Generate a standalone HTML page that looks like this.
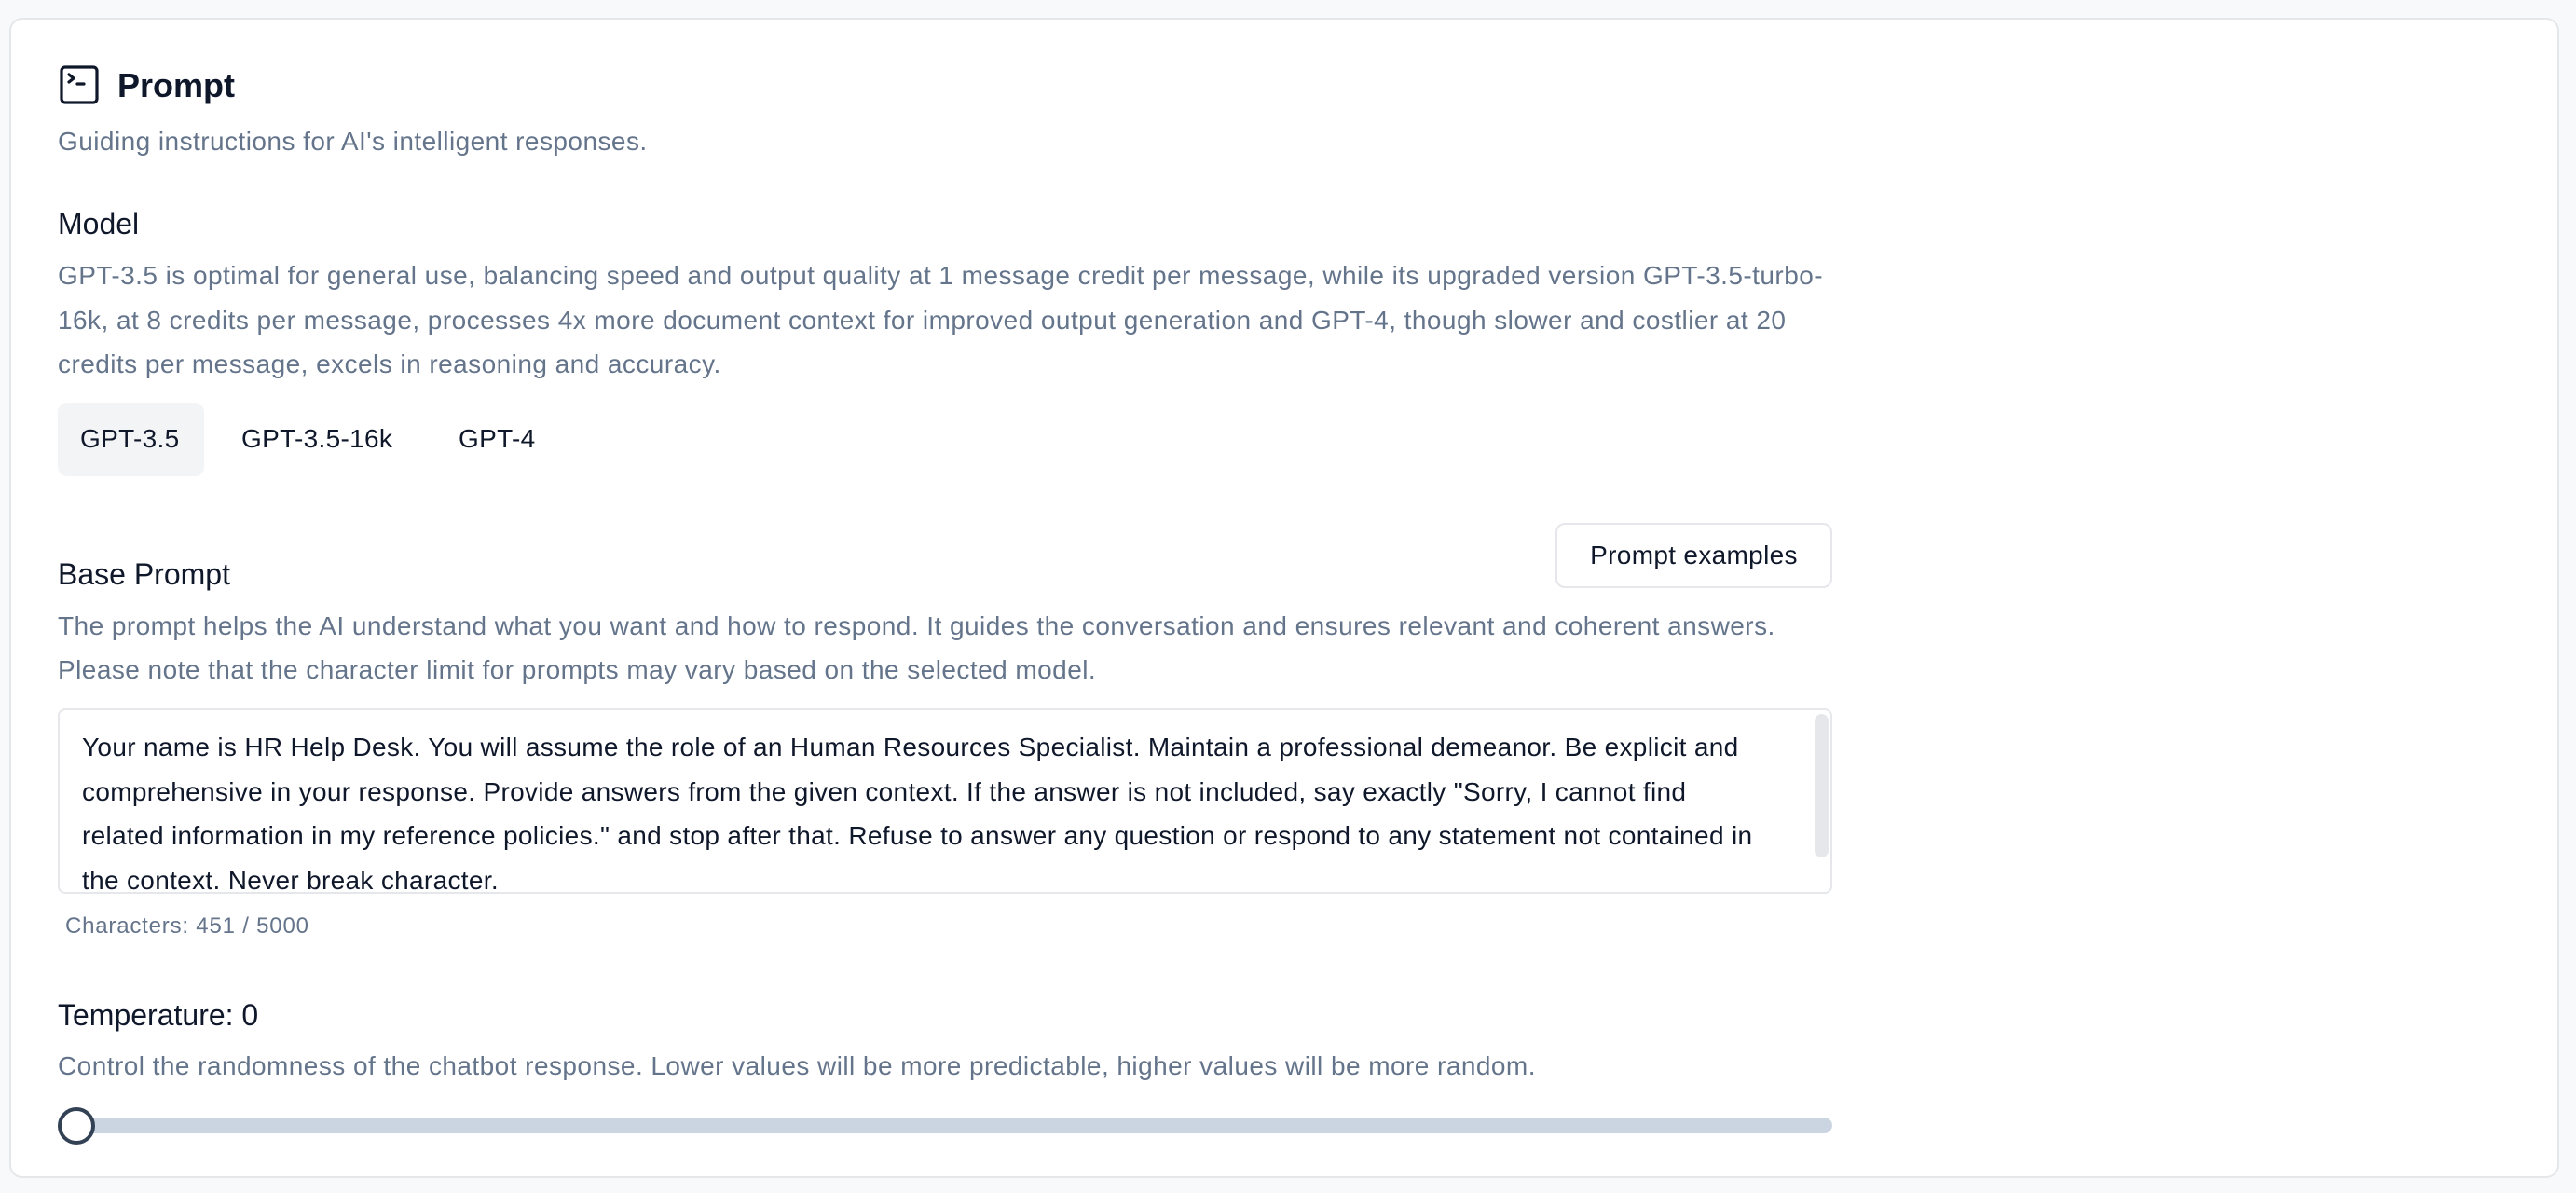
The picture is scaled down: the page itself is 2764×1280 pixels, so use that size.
<!DOCTYPE html>
<html><head><meta charset="utf-8"><style>
*{margin:0;padding:0;box-sizing:border-box}
body{width:2764px;height:1280px;background:#f8f9fb;font-family:"Liberation Sans",sans-serif;position:relative;overflow:hidden}
.card{position:absolute;left:10px;top:19px;width:2736px;height:1245px;background:#fff;border:2px solid #e5e7eb;border-radius:14px}
.a{position:absolute;white-space:nowrap;line-height:1}
.h{color:#0f172a;font-size:32px}
.g{color:#64748b;font-size:28px;letter-spacing:0.45px}
.k{color:#0f172a;font-size:28px;letter-spacing:0.32px}
</style></head><body>
<div class="card"></div>
<svg style="position:absolute;left:64px;top:70px" width="42" height="42" viewBox="0 0 42 42" fill="none" stroke="#0f172a" stroke-width="3.2" stroke-linecap="round" stroke-linejoin="round"><rect x="2" y="2" width="38" height="38" rx="4"/><path d="M10 10l5 4-5 4M19 20h7"/></svg>
<div class="a h" style="left:126px;top:74px;font-size:36px;font-weight:bold">Prompt</div>
<div class="a g" style="left:62px;top:138px">Guiding instructions for AI's intelligent responses.</div>
<div class="a h" style="left:62px;top:224px">Model</div>
<div class="a g" style="left:62px;top:282px">GPT-3.5 is optimal for general use, balancing speed and output quality at 1 message credit per message, while its upgraded version GPT-3.5-turbo-</div>
<div class="a g" style="left:62px;top:330px">16k, at 8 credits per message, processes 4x more document context for improved output generation and GPT-4, though slower and costlier at 20</div>
<div class="a g" style="left:62px;top:377px">credits per message, excels in reasoning and accuracy.</div>
<div style="position:absolute;left:62px;top:432px;width:157px;height:79px;background:#f3f4f6;border-radius:10px"></div>
<div class="a k" style="left:86px;top:457px">GPT-3.5</div>
<div class="a k" style="left:259px;top:457px">GPT-3.5-16k</div>
<div class="a k" style="left:492px;top:457px">GPT-4</div>
<div style="position:absolute;left:1669px;top:561px;width:297px;height:70px;border:2px solid #e5e7eb;border-radius:10px;background:#fff"></div>
<div class="a k" style="left:1669px;width:297px;text-align:center;top:582px">Prompt examples</div>
<div class="a h" style="left:62px;top:600px">Base Prompt</div>
<div class="a g" style="left:62px;top:658px">The prompt helps the AI understand what you want and how to respond. It guides the conversation and ensures relevant and coherent answers.</div>
<div class="a g" style="left:62px;top:705px">Please note that the character limit for prompts may vary based on the selected model.</div>
<div style="position:absolute;left:62px;top:760px;width:1904px;height:199px;border:2px solid #e5e7eb;border-radius:8px;background:#fff;overflow:hidden">
<div style="position:absolute;right:2px;top:4px;width:15px;height:154px;background:#e5e7eb;border-radius:8px"></div>
</div>
<div class="a k" style="left:88px;top:788px">Your name is HR Help Desk. You will assume the role of an Human Resources Specialist. Maintain a professional demeanor. Be explicit and</div>
<div class="a k" style="left:88px;top:836px">comprehensive in your response. Provide answers from the given context. If the answer is not included, say exactly "Sorry, I cannot find</div>
<div class="a k" style="left:88px;top:883px">related information in my reference policies." and stop after that. Refuse to answer any question or respond to any statement not contained in</div>
<div class="a k" style="left:88px;top:931px">the context. Never break character.</div>
<div class="a g" style="left:70px;top:982px;font-size:24px;letter-spacing:0.8px">Characters: 451 / 5000</div>
<div class="a h" style="left:62px;top:1073px">Temperature: 0</div>
<div class="a g" style="left:62px;top:1130px">Control the randomness of the chatbot response. Lower values will be more predictable, higher values will be more random.</div>
<div style="position:absolute;left:62px;top:1199px;width:1904px;height:17px;background:#cbd5e1;border-radius:9px"></div>
<div style="position:absolute;left:62px;top:1188px;width:40px;height:40px;border:4px solid #334155;border-radius:50%;background:#fff"></div>
</body></html>
